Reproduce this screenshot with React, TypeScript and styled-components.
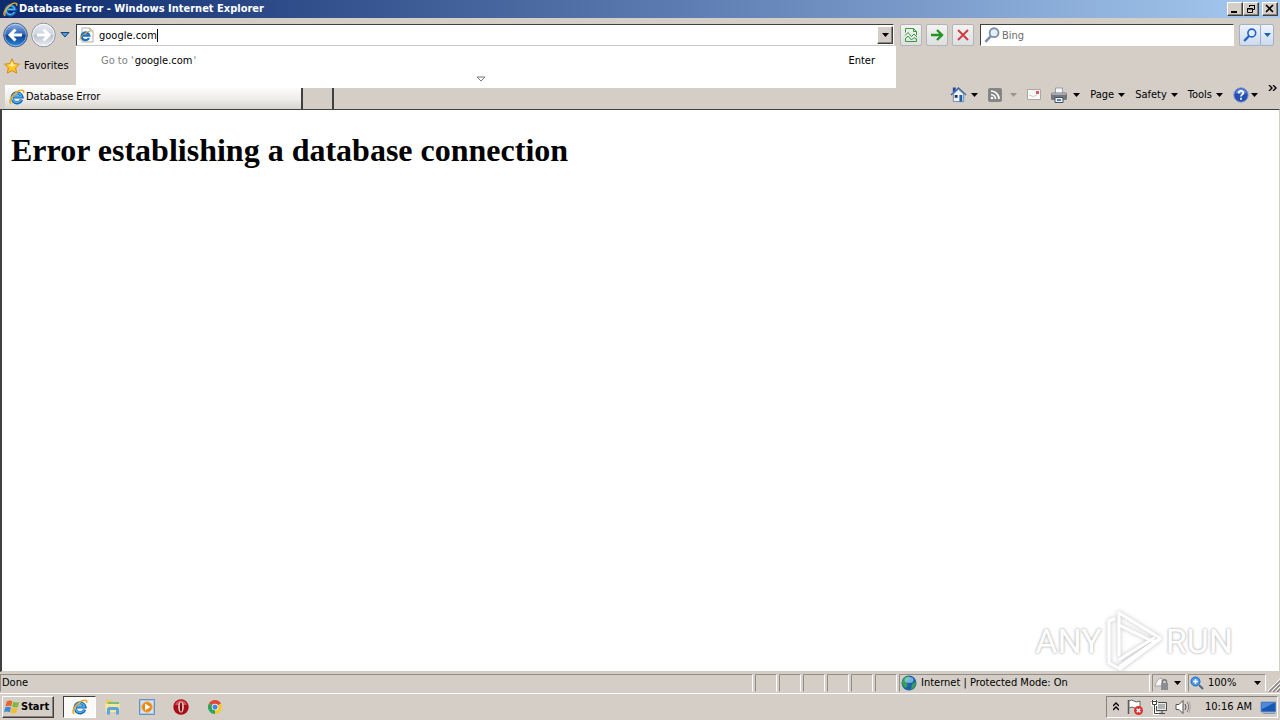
import React from "react";
import styled, { createGlobalStyle, css } from "styled-components";

const face = "#d4cec7";
const ui = `"DejaVu Sans Condensed", "DejaVu Sans", sans-serif`;

const Global = createGlobalStyle`
  * { box-sizing: border-box; }
  body { margin: 0; background: ${face}; }
  button, input { font: inherit; color: inherit; }
  svg { display: block; flex: none; }
`;

const raised = css`
  border: 1px solid;
  border-color: #fff #404040 #404040 #fff;
  box-shadow: inset -1px -1px #86827c;
`;

const Desktop = styled.div`
  display: flex;
  flex-direction: column;
  min-height: 100vh;
  overflow: hidden;
  background: ${face};
  color: #000;
  font: 11px/14px ${ui};
`;

const TitleBar = styled.header`
  display: flex;
  align-items: center;
  gap: 1px;
  height: 18px;
  padding: 0 2px 0 3px;
  background: linear-gradient(90deg, #0c2a6c, #5877ad 50%, #a6caf0);
  color: #fff;
  font-weight: bold;
`;

const Title = styled.span`
  flex: 1;
  white-space: nowrap;
`;

const WindowButton = styled.button<{ $gap?: boolean }>`
  ${raised}
  display: grid;
  place-items: center;
  width: 16px;
  height: 14px;
  margin-left: ${(p) => (p.$gap ? 2 : -1)}px;
  padding: 0;
  background: ${face};
`;

const NavRow = styled.div`
  display: flex;
  align-items: center;
  height: 34px;
  padding: 0 6px 0 3px;
`;

const PlainButton = styled.button<{ $gap?: number }>`
  display: flex;
  align-items: center;
  gap: ${(p) => p.$gap ?? 4}px;
  padding: 0;
  border: 0;
  background: none;
  white-space: nowrap;
`;

const History = styled.div`
  display: flex;
  align-items: center;
  gap: 3px;
  width: 73px;
`;

const AddressBox = styled.form`
  position: relative;
  display: flex;
  flex: 1;
  align-items: center;
  height: 22px;
  padding-left: 2px;
  border: 1px solid;
  border-color: #404040 #fff #c8c8c8 #404040;
  background: #fff;
`;

const AddressInput = styled.input`
  field-sizing: content;
  margin-left: 4px;
  padding: 1px 0 0;
  border: 0;
  outline: 0;
  background: none;
  line-height: 14px;
`;

const Caret = styled.span`
  width: 1px;
  height: 13px;
  background: #000;
`;

const DropButton = styled.button`
  ${raised}
  display: grid;
  place-items: center;
  width: 16px;
  height: 18px;
  margin-left: auto;
  padding: 0;
  background: ${face};
`;

const Suggestions = styled.div`
  position: absolute;
  z-index: 2;
  top: 21px;
  left: -1px;
  right: -3px;
  display: flex;
  flex-direction: column;
  align-items: center;
  height: 42px;
  padding: 8px 20px 0 25px;
  background: #fff;
`;

const Suggestion = styled.div`
  display: flex;
  justify-content: space-between;
  width: 100%;
  height: 22px;
  color: #808080;
`;

const Typed = styled.span`
  margin: 0 1px;
  color: #000;
`;

const MoreButton = styled.button`
  margin-right: 16px;
  padding: 0;
  border: 0;
  background: none;
`;

const NavTools = styled.div`
  display: flex;
  gap: 4px;
  margin: 0 6px;
`;

const NavButton = styled.button<{ $width?: number }>`
  display: grid;
  place-items: center;
  width: ${(p) => p.$width ?? 22}px;
  height: 22px;
  padding: 0;
  border: 1px solid #b3b4b6;
  border-radius: 2px;
  background: linear-gradient(#f4f3f2, #dddfe1);
`;

const SearchBox = styled.form`
  display: flex;
  align-items: center;
  gap: 2px;
  width: 254px;
  height: 22px;
  padding: 0 3px;
  border: 1px solid;
  border-color: #404040 #fff #fff #404040;
  background: #fff;
`;

const SearchInput = styled.input`
  flex: 1;
  min-width: 0;
  padding: 1px 0 0;
  border: 0;
  outline: 0;
  &::placeholder { color: #6d6d6d; opacity: 1; }
`;

const SearchTools = styled.div`
  display: flex;
  margin-left: 5px;
  button { background: linear-gradient(#eef3fb, #cddbee); border-color: #a3b1c6; }
  button + button { margin-left: -1px; }
`;

const FavoritesRow = styled.div`
  display: flex;
  height: 28px;
  padding-left: 4px;
`;

const TabRow = styled.div`
  display: flex;
  align-items: flex-end;
  height: 29px;
  padding: 0 3px 0 5px;
`;

const Tab = styled.button<{ $blank?: boolean }>`
  display: flex;
  align-items: center;
  gap: 1px;
  width: ${(p) => (p.$blank ? 30 : 298)}px;
  height: 24px;
  margin-right: 1px;
  padding: 0 0 0 4px;
  border: 0;
  border-right: 2px solid #404040;
  background: ${(p) => (p.$blank ? face : "linear-gradient(#fff, #eeece9 60%, #d8d4ce)")};
`;

const CommandBar = styled.nav`
  display: flex;
  align-items: center;
  gap: 10px;
  height: 29px;
  margin-left: auto;
`;

const Chevron = styled.span`
  align-self: flex-start;
  display: block;
  padding-top: 5px;
`;

const Page = styled.main`
  position: relative;
  flex: 1;
  padding: 0 9px;
  border: solid;
  border-width: 1px 1px 1px 2px;
  border-color: #404040 #d0ccc6 #d0ccc6 #404040;
  background: #fff;
`;

const Heading = styled.h1`
  margin: 22px 0;
  font: bold 32px/37px "Liberation Serif", serif;
`;

const Watermark = styled.div`
  position: absolute;
  right: 46px;
  bottom: 0;
  display: flex;
  align-items: center;
  gap: 4px;
  color: #fff;
  font: 34px/60px Roboto, sans-serif;
  text-shadow: 0 0 3px #b4b4b4, 0 0 2px #c4c4c4;
  svg { overflow: visible; filter: drop-shadow(0 0 2px #bcbcbc); }
`;

const StatusBar = styled.footer`
  display: flex;
  gap: 2px;
  height: 22px;
  padding: 2px 0 1px;
  border-bottom: 1px solid #fff;
`;

const Panel = styled.div<{ $width?: number }>`
  display: flex;
  align-items: center;
  justify-content: space-between;
  flex: ${(p) => (p.$width ? "none" : 1)};
  width: ${(p) => (p.$width ? p.$width + "px" : "auto")};
  padding: 0 4px 0 1px;
  border: 1px solid;
  border-color: #918d87 #fff ${face} #918d87;
  white-space: nowrap;
`;

const PanelLabel = styled.span`
  display: flex;
  align-items: center;
  gap: 4px;
`;

const TaskBar = styled.nav`
  display: flex;
  align-items: center;
  height: 26px;
  padding: 0 2px;
`;

const StartButton = styled.button`
  ${raised}
  display: flex;
  align-items: center;
  gap: 1px;
  width: 52px;
  height: 22px;
  padding: 0 1px;
  background: ${face};
  font-weight: bold;
`;

const TaskButton = styled.button<{ $pressed?: boolean }>`
  display: grid;
  place-items: center;
  width: ${(p) => (p.$pressed ? 33 : 34)}px;
  height: 22px;
  padding: 0;
  border: ${(p) => (p.$pressed ? "1px solid" : "0")};
  border-color: #404040 #fff #fff #404040;
  background: ${(p) => (p.$pressed ? "#fbfaf9" : "none")};
  margin-left: ${(p) => (p.$pressed ? 9 : 0)}px;
`;

const Tray = styled.div`
  display: flex;
  align-items: center;
  gap: 8px;
  height: 22px;
  margin-left: auto;
  padding: 0 1px 0 6px;
  border: 1px solid;
  border-color: #86827c #fff #fff #86827c;
  white-space: nowrap;
`;

const Clock = styled.time`
  margin-left: 6px;
`;

const Arrow = ({ color = "#000" }: { color?: string }) => (
  <svg width="7" height="4" viewBox="0 0 7 4"><path d="M0 0h7L3.5 4z" fill={color} /></svg>
);

const IE = ({ size = 16 }: { size?: number }) => (
  <svg width={size} height={size} viewBox="0 0 16 16" fill="none">
    <path d="M12.7 10.7A5 5 0 1 1 13 8H4.5" stroke="#1763b5" strokeWidth="3.2" />
    <path d="M12.2 10.7A4.7 4.7 0 1 1 12.6 7.8H5" stroke="#53b8ef" strokeWidth="1.3" />
    <path d="M2.4 14.7C-1 13.5 2 7.3 7 3.5c4-3 9-3.4 7.5.5" stroke="#e9a91c" strokeWidth="1.5" />
    <path d="M3 14.2C1 12.5 4 7 8 4" stroke="#ffe48a" strokeWidth=".6" />
  </svg>
);

const PageIE = () => (
  <svg width="16" height="16" viewBox="0 0 16 16" fill="none">
    <path d="M3 1h8l3 3v11H3z" fill="#fff" stroke="#b4b0a8" />
    <path d="M11 1v3h3" stroke="#b4b0a8" />
    <path d="M10 11A3.9 3.9 0 1 1 10.3 8.500H3" stroke="#1c6fc0" strokeWidth="2.300" />
    <path d="M1.200 13.400C0 11 5 5.500 11 4.200" stroke="#e5a51b" />
  </svg>
);

const Round = ({ dim, flip }: { dim?: boolean; flip?: boolean }) => {
  const id = dim ? "orbDim" : "orbBlue";
  return (
    <svg width="25" height="26" viewBox="0 0 25 26">
      <defs>
        <linearGradient id={id} x2="0" y2="1">
          <stop stopColor={dim ? "#e8ebf1" : "#8fb2e5"} />
          <stop offset=".48" stopColor={dim ? "#cdd3df" : "#2e62b4"} />
          <stop offset=".5" stopColor={dim ? "#b7bfce" : "#0d3d91"} />
          <stop offset="1" stopColor={dim ? "#eef1f6" : "#2d8ddc"} />
        </linearGradient>
      </defs>
      <circle cx="12.5" cy="13" r="11.8" fill={`url(#${id})`} stroke={dim ? "#8d929e" : "#50648c"} />
      <circle cx="12.5" cy="13" r="10.7" fill="none" stroke="#fff" strokeOpacity={dim ? 0.8 : 0.45} />
      <path
        d="M19 13H7m5.500-5.500L7 13l5.500 5.500"
        transform={flip ? "matrix(-1 0 0 1 25 0)" : undefined}
        fill="none" stroke="#fff" strokeWidth="3"
      />
    </svg>
  );
};

const Star = () => (
  <svg width="16" height="16" viewBox="0 0 16 16">
    <path d="M8 .8l2.2 4.8 5.2.6-3.8 3.6 1 5.3L8 12.5l-4.6 2.6 1-5.3L.6 6.2l5.2-.6z" fill="#ffc628" stroke="#d58a12" />
    <path d="M8 3l1.3 3.5 3.5.4L8 8.5 3.5 7l3-.4z" fill="#fff0a0" />
  </svg>
);

const Magnifier = ({ color = "#1e62c8", size = 14 }: { color?: string; size?: number }) => (
  <svg width={size} height={size} viewBox="0 0 14 14" fill="none" stroke={color}>
    <circle cx="8.8" cy="5" r="3.9" strokeWidth="1.6" fill="#e2f0fc" />
    <path d="M6 8L1.2 13" strokeWidth="2.3" />
  </svg>
);

const House = () => (
  <svg width="17" height="17" viewBox="0 0 18 17">
    <path d="M3.5 8L9 3l5.5 5v8h-11z" fill="#eef3fa" stroke="#7188ab" />
    <path d="M3 6V1h3v3" fill="#23469a" />
    <path d="M1 9l8-7.5L17 9" fill="none" stroke="#4468a6" strokeWidth="1.5" />
    <path d="M10 9h3v7h-3z" fill="#1d61a8" /><path d="M5 9h3v3H5z" fill="#24344e" />
  </svg>
);

const Feed = () => (
  <svg width="14" height="14" viewBox="0 0 14 14" fill="none">
    <rect width="14" height="14" rx="2" fill="#858585" />
    <path d="M3 6.5a4.500 4.500 0 0 1 4.500 4.500M3 3a8 8 0 0 1 8 8" stroke="#fff" strokeWidth="1.700" />
    <circle cx="4" cy="10" r="1.300" fill="#fff" />
  </svg>
);

const Mail = () => (
  <svg width="14" height="11" viewBox="0 0 14 11">
    <path d="M.5.5h13v10H.5z" fill="#faf9f7" stroke="#aaa6a0" />
    <path d="M9 2h3v3H9z" fill="#d9585c" /><path d="M2 6q5 3 8 0" fill="none" stroke="#ccc" />
  </svg>
);

const Printer = () => (
  <svg width="16" height="16" viewBox="0 0 16 16">
    <path d="M4.500 1h7v6h-7z" fill="#f6f9fd" stroke="#9b9da2" />
    <rect y="5.500" width="16" height="7.500" rx="1.500" fill="#74777d" />
    <path d="M1 7h14" stroke="#b9bcc1" strokeWidth="1.500" />
    <path d="M4 10.500h8v5H4z" fill="#eef4fa" stroke="#4d5057" /><path d="M6 13h4" stroke="#4c87c8" strokeWidth="2" />
  </svg>
);

const Help = () => (
  <svg width="16" height="16" viewBox="0 0 16 16">
    <circle cx="8" cy="8" r="7.2" fill="#2450b4" stroke="#8499c7" />
    <path d="M2.5 6a5.800 5.800 0 0 1 11 0q-5.500 2-11 0" fill="#6b91df" />
    <path d="M5.800 6.200c0-3 4.600-2.900 4.500-.2C10.300 7.700 8 7.600 8 9.500M8 10.800v2" fill="none" stroke="#fff" strokeWidth="1.700" />
  </svg>
);

const Compat = () => (
  <svg width="14" height="16" viewBox="0 0 14 16" fill="none" stroke="#359a3c">
    <path d="M1.5 5.500V1.500h8l3 3V8M1.500 12v2.500h11V11.500M9.500 1.500v3h3" />
    <path d="M1 8.500l3-3 3.500 4L10 7l3 3M1 12l3-3 3.500 4 2.500-2.500 2.500 2" />
  </svg>
);

const Windows = () => (
  <svg width="16" height="16" viewBox="0 0 16 16">
    <path d="M2.8 2.2q3-1.500 5.600.1L7.200 7.300Q4.500 6 1.500 7.300z" fill="#e7652b" />
    <path d="M9.200 2.700q3 1.300 6 .2l-1.400 5q-2.800 1.100-5.700-.2z" fill="#7fb93d" />
    <path d="M1.300 8.200Q4.300 7 7 8.400L5.700 13.200Q3 12 .1 13.200z" fill="#3a88d6" />
    <path d="M7.800 8.800q2.800 1.300 5.700.2l-1.300 4.700q-3 1.200-5.700-.2z" fill="#f5bd2a" />
  </svg>
);

const Folder = () => (
  <svg width="16" height="16" viewBox="0 0 16 16">
    <path d="M1 3V1h5l1 2h7v9H1z" fill="#eec95c" /><path d="M3 3h11v3H3z" fill="#79bf72" />
    <path d="M0 5h15l-1 8H1z" fill="#fae69b" />
    <path d="M2 15.500v-5Q2 8 4.500 8h7q2.500 0 2.500 2.500v5h-3V11H5v4.500z" fill="#5aa6de" />
  </svg>
);

const Media = () => (
  <svg width="16" height="16" viewBox="0 0 16 16">
    <path d="M.5.5h15v15H.5z" fill="#a8cbed" stroke="#6592bf" /><path d="M2 2h12v12H2z" fill="#d3e6f7" />
    <circle cx="8" cy="8" r="5.3" fill="#ee8510" stroke="#fbb55a" /><path d="M6 4.500L11.500 8 6 11.500z" fill="#fff" />
  </svg>
);

const Opera = () => (
  <svg width="16" height="16" viewBox="0 0 16 16">
    <circle cx="8" cy="8" r="7.7" fill="#a90d17" /><path d="M2 6a6.300 6.300 0 0 1 12 0z" fill="#d85158" />
    <ellipse cx="8" cy="8" rx="2.8" ry="5.5" fill="#f5dcdc" /><ellipse cx="8" cy="8" rx="1.3" ry="4.700" fill="#77121a" />
  </svg>
);

const Chrome = () => (
  <svg width="14" height="14" viewBox="0 0 16 16">
    <path d="M8 8L1.070 4A8 8 0 0 1 14.930 4z" fill="#df4937" />
    <path d="M8 8L14.930 4A8 8 0 0 1 8 16z" fill="#f7ca35" />
    <path d="M8 8v8A8 8 0 0 1 1.070 4z" fill="#31a456" />
    <circle cx="8" cy="8" r="3.700" fill="#fff" /><circle cx="8" cy="8" r="2.900" fill="#4285e8" />
  </svg>
);

const Globe = () => (
  <svg width="16" height="16" viewBox="0 0 16 16">
    <circle cx="8" cy="8" r="7.500" fill="#1d62aa" />
    <path d="M1 7C2 3 5 1 8 1l1 3-4 3 2 3-2 3C2 12 1 9 1 7zM11 9l4-2c0 4-2 6-5 8z" fill="#37a052" />
    <ellipse cx="8" cy="5" rx="4.500" ry="3" fill="#a5d9ff" opacity=".65" />
  </svg>
);

const Lock = () => (
  <svg width="15" height="15" viewBox="0 0 15 15">
    <path d="M1 10q2-8 7-8v8z" fill="#f6f6f6" stroke="#aaa" /><path d="M7 7h7v7H7z" fill="#8b8d93" />
    <path d="M8.500 7V5q2-2.500 4 0v2" fill="none" stroke="#777" strokeWidth="1.300" />
  </svg>
);

const ZoomIcon = () => (
  <svg width="14" height="14" viewBox="0 0 14 14" fill="none">
    <circle cx="5.500" cy="5.500" r="4.500" fill="#4a98e8" stroke="#236bc0" />
    <path d="M5.500 3v5M3 5.500h5" stroke="#fff" strokeWidth="1.500" /><path d="M9 9l4 4" stroke="#51657c" strokeWidth="2" />
  </svg>
);

const Grip = () => (
  <svg width="12" height="18" viewBox="0 0 12 18" fill="none">
    <path d="M1 18L13 6M5 18l8-8M9 18l4-4" stroke="#8a867f" strokeWidth="1.500" />
    <path d="M0 17L13 4M4 17l9-9M8 17l5-5" stroke="#fff" />
  </svg>
);

const Flag = () => (
  <svg width="16" height="16" viewBox="0 0 16 16">
    <path d="M1.500 1v14" stroke="#555" strokeWidth="1.500" /><path d="M2 2q3-2 5 0t6 0v7q-3 2-5.500 0T2 9z" fill="#fff" stroke="#666" />
    <circle cx="11.500" cy="11.500" r="4.500" fill="#d33434" /><path d="M9.700 9.700l3.600 3.600m0-3.600l-3.600 3.600" stroke="#fff" strokeWidth="1.400" />
  </svg>
);

const Network = () => (
  <svg width="16" height="16" viewBox="0 0 16 16" fill="none">
    <path d="M5.500 3.500h10v8h-10zM8 14.500h6M11 12v2" fill="#eee" stroke="#494949" />
    <path d="M7 5h7v5H7z" fill="#aeb2b5" />
    <path d="M1.500 1v4.500h4V1M.5 2.500h6M3.500 6v8.500H8" stroke="#fff" strokeWidth="3" />
    <path d="M1.500 1v4.500h4V1M.5 2.500h6M3.500 6v8.500H8" stroke="#444" />
  </svg>
);

const Speaker = () => (
  <svg width="16" height="16" viewBox="0 0 16 16" fill="none" stroke="#555">
    <path d="M1 5.500h3l4-4v13l-4-4H1z" fill="#fff" />
    <path d="M10 5q2 3 0 6" /><path d="M12 3q3.500 5 0 10" stroke="#777" /><path d="M14 2q3 6 0 12" stroke="#aaa" />
  </svg>
);

const Monitor = () => (
  <svg width="16" height="15" viewBox="0 0 16 15">
    <path d="M1 2h15v10H1z" fill="#1857b2" stroke="#789bc9" /><path d="M2 3h12L2 9z" fill="#4c8be0" />
    <path d="M3 13.500h12" stroke="#8698b4" />
  </svg>
);

const PlayMark = () => (
  <svg width="56" height="60" viewBox="0 0 56 60" fill="none" stroke="#fff" strokeLinejoin="round" strokeLinecap="round">
    <path d="M13 2l41 25-40 28" strokeWidth="3" />
    <path d="M13 2v42" strokeWidth="3" />
    <path d="M8 8L3 10v42l11 6 40-30" strokeWidth="3" />
    <path d="M13 14l35 17M14 48l34-21" strokeWidth="3" />
  </svg>
);

const menus = ["Page", "Safety", "Tools"];
const blanks = [1, 2, 3, 4, 5, 6];

export default function App() {
  return (
    <Desktop>
      <Global />
      <TitleBar>
        <IE size={15} />
        <Title>Database Error - Windows Internet Explorer</Title>
        <WindowButton aria-label="Minimize"><svg width="10" height="10"><path d="M1 8h6" stroke="#000" strokeWidth="2" /></svg></WindowButton>
        <WindowButton aria-label="Restore">
          <svg width="10" height="10" fill="none" stroke="#000"><path d="M3.500 3V1.500h5v4H7M3 1.500h6M1.500 4.500h5v4h-5zM1 5h6" /></svg>
        </WindowButton>
        <WindowButton $gap aria-label="Close"><svg width="10" height="10"><path d="M1 1l7 7M8 1L1 8" stroke="#000" strokeWidth="1.600" /></svg></WindowButton>
      </TitleBar>

      <NavRow>
        <History>
          <PlainButton aria-label="Back"><Round /></PlainButton>
          <PlainButton aria-label="Forward"><Round dim flip /></PlainButton>
          <PlainButton aria-label="Recent pages">
            <svg width="12" height="6" viewBox="0 0 12 6"><path d="M2 .5h8L6 5z" fill="#4d9be0" stroke="#1d4675" /></svg>
          </PlainButton>
        </History>
        <AddressBox>
          <PageIE />
          <AddressInput aria-label="Address" defaultValue="google.com" />
          <Caret />
          <DropButton type="button" aria-label="Show addresses"><Arrow /></DropButton>
          <Suggestions>
            <Suggestion>
              <span>Go to '<Typed>google.com</Typed>'</span>
              <Typed>Enter</Typed>
            </Suggestion>
            <MoreButton type="button" aria-label="More">
              <svg width="10" height="6" viewBox="0 0 10 6"><path d="M1 1h8L5 5z" fill="#fff" stroke="#777" /></svg>
            </MoreButton>
          </Suggestions>
        </AddressBox>
        <NavTools>
          <NavButton aria-label="Compatibility view"><Compat /></NavButton>
          <NavButton aria-label="Go"><svg width="14" height="12" fill="none" stroke="#239425" strokeWidth="2.400"><path d="M1 6h11M7 1l5 5-5 5" /></svg></NavButton>
          <NavButton aria-label="Stop"><svg width="14" height="14"><path d="M2 2l10 10M12 2L2 12" stroke="#cf3d43" strokeWidth="2" /></svg></NavButton>
        </NavTools>
        <SearchBox>
          <Magnifier color="#7d8fa8" size={16} />
          <SearchInput aria-label="Search" placeholder="Bing" />
        </SearchBox>
        <SearchTools>
          <NavButton aria-label="Search"><Magnifier /></NavButton>
          <NavButton $width={14} aria-label="Search options"><Arrow color="#1e62b8" /></NavButton>
        </SearchTools>
      </NavRow>

      <FavoritesRow>
        <PlainButton><Star />Favorites</PlainButton>
      </FavoritesRow>

      <TabRow>
        <Tab><IE />Database Error</Tab>
        <Tab $blank aria-label="New tab" />
        <CommandBar>
          <PlainButton aria-label="Home"><House /><Arrow /></PlainButton>
          <PlainButton $gap={8} aria-label="Feeds"><Feed /><Arrow color="#99958f" /></PlainButton>
          <PlainButton aria-label="Read mail"><Mail /></PlainButton>
          <PlainButton $gap={6} aria-label="Print"><Printer /><Arrow /></PlainButton>
          {menus.map((m) => <PlainButton key={m}>{m}<Arrow /></PlainButton>)}
          <PlainButton $gap={2} aria-label="Help"><Help /><Arrow /></PlainButton>
          <Chevron>
            <svg width="9" height="6" fill="none" stroke="#000" strokeWidth="1.400"><path d="M1 0l3 3-3 3M5 0l3 3-3 3" /></svg>
          </Chevron>
        </CommandBar>
      </TabRow>

      <Page>
        <Heading>Error establishing a database connection</Heading>
        <Watermark><span>ANY</span><PlayMark /><span>RUN</span></Watermark>
      </Page>

      <StatusBar>
        <Panel>Done</Panel>
        {blanks.map((b) => <Panel key={b} $width={22} />)}
        <Panel $width={251}><PanelLabel><Globe />Internet | Protected Mode: On</PanelLabel></Panel>
        <Panel $width={34}><Lock /><Arrow /></Panel>
        <Panel $width={78}><PanelLabel><ZoomIcon />100%</PanelLabel><Arrow /></Panel>
        <Grip />
      </StatusBar>

      <TaskBar>
        <StartButton><Windows />Start</StartButton>
        <TaskButton $pressed aria-label="Internet Explorer"><IE /></TaskButton>
        <TaskButton aria-label="Explorer"><Folder /></TaskButton>
        <TaskButton aria-label="Media Player"><Media /></TaskButton>
        <TaskButton aria-label="Opera"><Opera /></TaskButton>
        <TaskButton aria-label="Chrome"><Chrome /></TaskButton>
        <Tray>
          <svg width="6" height="10" fill="none" stroke="#000" strokeWidth="1.400"><path d="M0 4l3-3 3 3M0 8l3-3 3 3" /></svg>
          <Flag /><Network /><Speaker />
          <Clock>10:16 AM</Clock>
          <Monitor />
        </Tray>
      </TaskBar>
    </Desktop>
  );
}
